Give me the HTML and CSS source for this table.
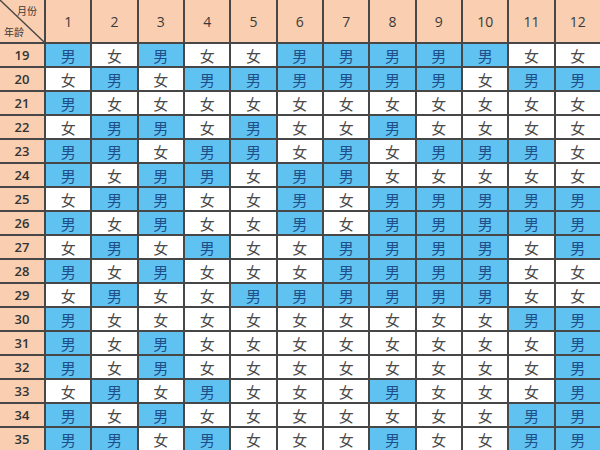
FILE: index.html
```html
<!DOCTYPE html>
<html lang="zh">
<head>
<meta charset="utf-8">
<link rel="stylesheet" href="styles.css">
</head>
<body>
<div class="chart">
  <div class="h corner">
    <svg class="diag" viewBox="0 0 44 42" preserveAspectRatio="none"><line x1="0" y1="0" x2="44" y2="42" stroke="#444" stroke-width="1.3"/></svg>
    <span class="lab-m">月份</span>
    <span class="lab-a">年龄</span>
  </div>
  <div class="h">1</div><div class="h">2</div><div class="h">3</div><div class="h">4</div><div class="h">5</div><div class="h">6</div><div class="h">7</div><div class="h">8</div><div class="h">9</div><div class="h">10</div><div class="h">11</div><div class="h">12</div>

  <div class="a">19</div><div class="b">男</div><div class="g">女</div><div class="b">男</div><div class="g">女</div><div class="g">女</div><div class="b">男</div><div class="b">男</div><div class="b">男</div><div class="b">男</div><div class="b">男</div><div class="g">女</div><div class="g">女</div>
  <div class="a">20</div><div class="g">女</div><div class="b">男</div><div class="g">女</div><div class="b">男</div><div class="b">男</div><div class="b">男</div><div class="b">男</div><div class="b">男</div><div class="b">男</div><div class="g">女</div><div class="b">男</div><div class="b">男</div>
  <div class="a">21</div><div class="b">男</div><div class="g">女</div><div class="g">女</div><div class="g">女</div><div class="g">女</div><div class="g">女</div><div class="g">女</div><div class="g">女</div><div class="g">女</div><div class="g">女</div><div class="g">女</div><div class="g">女</div>
  <div class="a">22</div><div class="g">女</div><div class="b">男</div><div class="b">男</div><div class="g">女</div><div class="b">男</div><div class="g">女</div><div class="g">女</div><div class="b">男</div><div class="g">女</div><div class="g">女</div><div class="g">女</div><div class="g">女</div>
  <div class="a">23</div><div class="b">男</div><div class="b">男</div><div class="g">女</div><div class="b">男</div><div class="b">男</div><div class="g">女</div><div class="b">男</div><div class="g">女</div><div class="b">男</div><div class="b">男</div><div class="b">男</div><div class="g">女</div>
  <div class="a">24</div><div class="b">男</div><div class="g">女</div><div class="b">男</div><div class="b">男</div><div class="g">女</div><div class="b">男</div><div class="b">男</div><div class="g">女</div><div class="g">女</div><div class="g">女</div><div class="g">女</div><div class="g">女</div>
  <div class="a">25</div><div class="g">女</div><div class="b">男</div><div class="b">男</div><div class="g">女</div><div class="g">女</div><div class="b">男</div><div class="g">女</div><div class="b">男</div><div class="b">男</div><div class="b">男</div><div class="b">男</div><div class="b">男</div>
  <div class="a">26</div><div class="b">男</div><div class="g">女</div><div class="b">男</div><div class="g">女</div><div class="g">女</div><div class="b">男</div><div class="g">女</div><div class="b">男</div><div class="b">男</div><div class="b">男</div><div class="b">男</div><div class="b">男</div>
  <div class="a">27</div><div class="g">女</div><div class="b">男</div><div class="g">女</div><div class="b">男</div><div class="g">女</div><div class="g">女</div><div class="b">男</div><div class="b">男</div><div class="b">男</div><div class="b">男</div><div class="g">女</div><div class="b">男</div>
  <div class="a">28</div><div class="b">男</div><div class="g">女</div><div class="b">男</div><div class="g">女</div><div class="g">女</div><div class="g">女</div><div class="b">男</div><div class="b">男</div><div class="b">男</div><div class="b">男</div><div class="g">女</div><div class="g">女</div>
  <div class="a">29</div><div class="g">女</div><div class="b">男</div><div class="g">女</div><div class="g">女</div><div class="b">男</div><div class="b">男</div><div class="b">男</div><div class="b">男</div><div class="b">男</div><div class="b">男</div><div class="g">女</div><div class="g">女</div>
  <div class="a">30</div><div class="b">男</div><div class="g">女</div><div class="g">女</div><div class="g">女</div><div class="g">女</div><div class="g">女</div><div class="g">女</div><div class="g">女</div><div class="g">女</div><div class="g">女</div><div class="b">男</div><div class="b">男</div>
  <div class="a">31</div><div class="b">男</div><div class="g">女</div><div class="b">男</div><div class="g">女</div><div class="g">女</div><div class="g">女</div><div class="g">女</div><div class="g">女</div><div class="g">女</div><div class="g">女</div><div class="g">女</div><div class="b">男</div>
  <div class="a">32</div><div class="b">男</div><div class="g">女</div><div class="b">男</div><div class="g">女</div><div class="g">女</div><div class="g">女</div><div class="g">女</div><div class="g">女</div><div class="g">女</div><div class="g">女</div><div class="g">女</div><div class="b">男</div>
  <div class="a">33</div><div class="g">女</div><div class="b">男</div><div class="g">女</div><div class="b">男</div><div class="g">女</div><div class="g">女</div><div class="g">女</div><div class="b">男</div><div class="g">女</div><div class="g">女</div><div class="g">女</div><div class="b">男</div>
  <div class="a">34</div><div class="b">男</div><div class="g">女</div><div class="b">男</div><div class="g">女</div><div class="g">女</div><div class="g">女</div><div class="g">女</div><div class="g">女</div><div class="g">女</div><div class="g">女</div><div class="b">男</div><div class="b">男</div>
  <div class="a">35</div><div class="b">男</div><div class="b">男</div><div class="g">女</div><div class="b">男</div><div class="g">女</div><div class="g">女</div><div class="g">女</div><div class="b">男</div><div class="g">女</div><div class="g">女</div><div class="b">男</div><div class="b">男</div>
</div>
</body>
</html>
```
FILE: styles.css
```css
html, body {
  margin: 0;
  padding: 0;
  background: #ffffff;
}
body {
  width: 600px;
  height: 450px;
  overflow: hidden;
}
.chart {
  display: grid;
  grid-template-columns: 44px repeat(12, 1fr);
  grid-template-rows: 42px;
  grid-auto-rows: 22px;
  gap: 2px;
  background: #474747;
  width: 600px;
  font-family: "Open Sans", "Noto Sans CJK SC", sans-serif;
}
.chart > div {
  display: flex;
  align-items: center;
  justify-content: center;
}
.h {
  background: #f9ceb1;
  color: #3a3a3a;
  font-size: 14px;
}
.corner {
  position: relative;
}
.diag {
  position: absolute;
  left: 0;
  top: 0;
  width: 100%;
  height: 100%;
}
.lab-m, .lab-a {
  position: absolute;
  font-family: "Noto Sans CJK SC", sans-serif;
  font-size: 10px;
  color: #3a3a3a;
  line-height: 1;
}
.lab-m {
  right: 7px;
  top: 6px;
}
.lab-a {
  left: 4px;
  bottom: 5px;
}
.a {
  background: #f9ceb1;
  color: #333333;
  font-size: 13px;
  font-weight: 600;
}
.b {
  background: #5fc2f1;
  color: #1f4f88;
  font-family: "Noto Sans CJK SC", sans-serif;
  font-size: 15px;
}
.g {
  background: #ffffff;
  color: #4a4a4a;
  font-family: "Noto Sans CJK SC", sans-serif;
  font-size: 15px;
}
```
